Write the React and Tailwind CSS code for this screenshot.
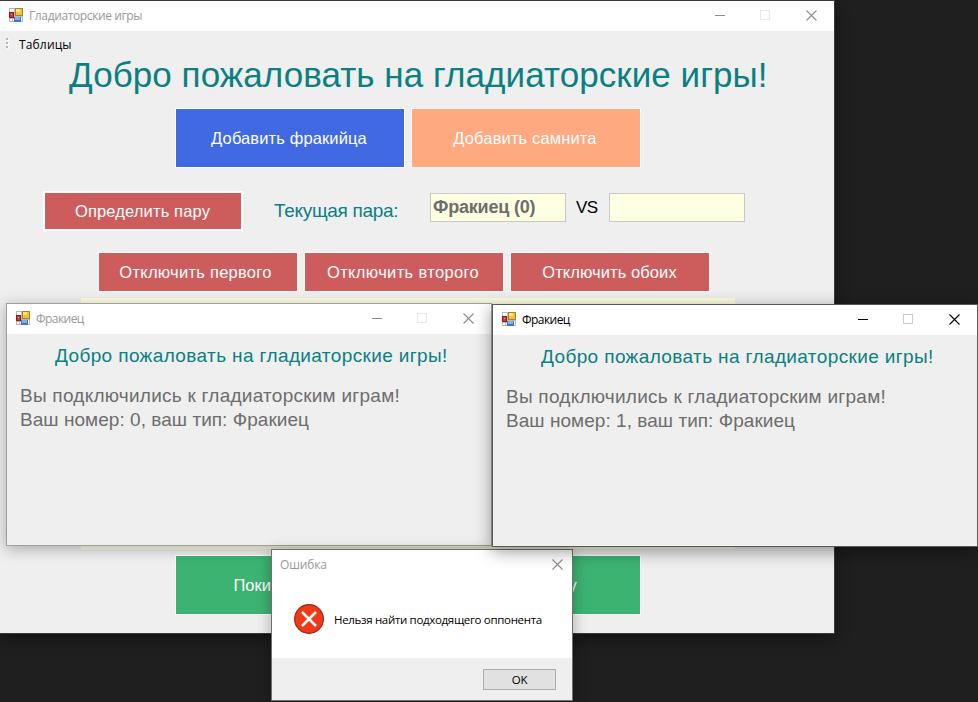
import React from "react";

const UI = "font-['Open_Sans','Noto_Sans',sans-serif]";

function FormIcon() {
  return (
    <svg width="14" height="14" viewBox="0 0 14 14" className="mb-[2px] shrink-0" shapeRendering="crispEdges">
      <rect width="14" height="14" fill="#b9b9b9" />
      <rect x="1" y="1" width="4" height="3" fill="#fff" />
      <rect x="1" y="11" width="2" height="2" fill="#fff" />
      <rect x="4" y="11" width="1" height="2" fill="#fff" />
      <rect x="12" y="9" width="1" height="4" fill="#fff" />
      <rect x="0" y="4" width="5" height="6" fill="#8e1c1c" />
      <rect x="1" y="5" width="3" height="4" fill="#c93a32" />
      <rect x="2" y="6" width="1" height="1" fill="#f0a09a" />
      <rect x="6" y="0" width="8" height="8" fill="#a8832a" />
      <rect x="7" y="1" width="6" height="6" fill="#f2c230" />
      <rect x="7" y="1" width="4" height="3" fill="#fbe48a" />
      <rect x="5" y="9" width="7" height="5" fill="#3f72c4" />
      <rect x="6" y="9" width="5" height="3" fill="#80b0ee" />
    </svg>
  );
}

function Cross({ color }) {
  return (
    <svg width="11" height="11" viewBox="0 0 11 11" className="shrink-0">
      <path d="M0.5 0.5L10.5 10.5M10.5 0.5L0.5 10.5" stroke={color} strokeWidth="1.1" fill="none" />
    </svg>
  );
}

function WindowButtons({ active }) {
  const color = active ? "#000" : "#8c8c8c";
  const muted = active ? "#cccccc" : "#e9e9e9";
  return (
    <div className="mb-px ml-auto flex items-start">
      <svg width="10" height="10" viewBox="0 0 10 10" className="mr-[35px]" shapeRendering="crispEdges">
        <rect y="5" width="10" height="1" fill={color} />
      </svg>
      <svg width="10" height="10" viewBox="0 0 10 10" className="mr-[36px]" shapeRendering="crispEdges">
        <rect x="0.5" y="0.5" width="9" height="9" fill="none" stroke={muted} />
      </svg>
      <Cross color={color} />
    </div>
  );
}

function TitleBar({ title, active, className }) {
  return (
    <div className={`flex h-[30px] shrink-0 items-center bg-white pl-[9px] pr-[17px] ${className}`}>
      <FormIcon />
      <span className={`ml-[6px] whitespace-nowrap text-[12px] leading-4 ${UI} ${active ? "text-black" : "text-[#999999]"}`}>
        {title}
      </span>
      <WindowButtons active={active} />
    </div>
  );
}

function ActionButton({ className, children }) {
  return (
    <button className={`flex shrink-0 items-center justify-center whitespace-nowrap border-white text-[16.5px] text-white ${className}`}>
      {children}
    </button>
  );
}

function FighterWindow({ number, active, className }) {
  return (
    <section className={`absolute h-[243px] w-[486px] border bg-[#efefef] ${className}`}>
      <TitleBar title="Фракиец" active={active} className="tracking-[-0.55px]" />
      <h2 className="ml-[48px] mt-[10px] whitespace-nowrap text-[19px] leading-6 tracking-[0.38px] text-[#0b8080]">
        Добро пожаловать на гладиаторские игры!
      </h2>
      <p className="ml-[13px] mt-[16px] whitespace-nowrap text-[19px] leading-6 text-[#6d6d6d]">
        <span className="tracking-[0.25px]">Вы подключились к гладиаторским играм!</span>
        <br />
        <span className="tracking-[0.04px]">Ваш номер: {number}, ваш тип: Фракиец</span>
      </p>
    </section>
  );
}

export default function App() {
  return (
    <main className="relative h-[702px] w-[978px] overflow-hidden bg-[#1f1f1f] font-['Liberation_Sans',Arial,sans-serif]">
      <section className="absolute left-0 top-0 flex h-[634px] w-[835px] flex-col border-b border-r border-t border-[#3a3a3a] bg-[#efefef] shadow-[0_5px_14px_rgba(0,0,0,0.4)]">
        <TitleBar title="Гладиаторские игры" className="tracking-[-0.38px]" />
        <nav className="flex h-6 shrink-0 items-center pl-[6px]">
          <div className="mb-px flex w-[13px] flex-col gap-[2px]">
            <i className="size-[2px] bg-[#b4b4b4] shadow-[1px_1px_0_#fff]" />
            <i className="size-[2px] bg-[#b4b4b4] shadow-[1px_1px_0_#fff]" />
            <i className="size-[2px] bg-[#b4b4b4] shadow-[1px_1px_0_#fff]" />
          </div>
          <span className={`mt-[3px] text-[12px] leading-4 tracking-[0.15px] text-black ${UI}`}>Таблицы</span>
        </nav>
        <h1 className="ml-[69px] h-[53px] shrink-0 whitespace-nowrap text-[35px] leading-10 tracking-[0.06px] text-[#0b8080]">
          Добро пожаловать на гладиаторские игры!
        </h1>
        <div className="flex gap-[6px] pl-[175px]">
          <ActionButton className="h-[60px] w-[230px] border bg-[#4169e1] pr-[2px] tracking-[0.12px]">Добавить фракийца</ActionButton>
          <ActionButton className="h-[60px] w-[230px] border bg-[#ffa980] pr-[2px] tracking-[0.14px]">Добавить самнита</ActionButton>
        </div>
        <div className="mt-[23px] flex h-[40px] shrink-0 items-center pl-[43px]">
          <ActionButton className="h-[40px] w-[200px] border-2 bg-[#cd5c5c] pr-px tracking-[0.14px]">Определить пару</ActionButton>
          <span className="ml-[31px] w-[156px] whitespace-nowrap text-[19px] leading-6 tracking-[-0.3px] text-[#0b8080]">Текущая пара:</span>
          <div className="mb-[7px] flex h-[29px] w-[136px] shrink-0 items-center whitespace-nowrap border border-[#c8c8c8] bg-[#ffffe1] pl-[2px] text-[18px] font-bold tracking-[-0.2px] text-[#6d6d6d]">
            Фракиец (0)
          </div>
          <span className="mb-[7px] w-[43px] pl-[10px] text-[17px] tracking-[-0.5px] text-black">VS</span>
          <div className="mb-[7px] h-[29px] w-[136px] shrink-0 border border-[#c8c8c8] bg-[#ffffe1]" />
        </div>
        <div className="mt-[21px] flex gap-[6px] pl-[98px]">
          <ActionButton className="h-[40px] w-[200px] border border-[#f7f7f7] bg-[#cd5c5c] pr-[5px] tracking-[0.26px]">Отключить первого</ActionButton>
          <ActionButton className="h-[40px] w-[200px] border border-[#f7f7f7] bg-[#cd5c5c] pr-[2px] tracking-[0.34px]">Отключить второго</ActionButton>
          <ActionButton className="h-[40px] w-[200px] border border-[#f7f7f7] bg-[#cd5c5c] pr-px tracking-[0.08px]">Отключить обоих</ActionButton>
        </div>
        <div className="ml-[81px] mt-[6px] h-[251px] w-[654px] shrink-0 bg-[#ffffe1]" />
        <div className="mt-[6px] flex gap-[6px] pl-[175px]">
          <ActionButton className="h-[60px] w-[230px] border bg-[#3cb371] pr-[5px]">Покинуть игру</ActionButton>
          <ActionButton className="h-[60px] w-[230px] border bg-[#3cb371]">Начать битву</ActionButton>
        </div>
      </section>

      <FighterWindow
        number={0}
        className="left-[6px] top-[303px] border-[#a0a0a0] shadow-[0_3px_14px_rgba(0,0,0,0.3)]"
      />

      <section className="absolute left-[271px] top-[549px] flex h-[152px] w-[302px] flex-col border border-[#707070] bg-white shadow-[0_3px_14px_rgba(0,0,0,0.3)]">
        <div className="flex h-[30px] items-center pl-[8px] pr-[9px]">
          <span className={`text-[12px] leading-4 tracking-[-0.15px] text-[#999999] ${UI}`}>Ошибка</span>
          <span className="mb-px ml-auto flex">
            <Cross color="#8c8c8c" />
          </span>
        </div>
        <div className="flex h-[78px] items-center pl-[22px]">
          <svg width="30" height="30" viewBox="0 0 30 30" className="shrink-0">
            <circle cx="15" cy="15" r="14.4" fill="#f03a17" stroke="#9c2b1b" strokeWidth="1.2" />
            <path d="M8 8L22 22M22 8L8 22" stroke="#fff" strokeWidth="2.5" fill="none" />
          </svg>
          <span className={`ml-[10px] mt-[2px] whitespace-nowrap text-[11.5px] leading-4 tracking-[-0.33px] text-black ${UI}`}>
            Нельзя найти подходящего оппонента
          </span>
        </div>
        <div className="flex flex-1 items-center justify-end bg-[#efefef] pr-[16px]">
          <button className={`h-[21px] w-[73px] border border-[#adadad] bg-[#e1e1e1] pt-px text-[11.5px] leading-4 tracking-[-0.3px] text-black ${UI}`}>
            OK
          </button>
        </div>
      </section>

      <FighterWindow
        number={1}
        active
        className="left-[492px] top-[304px] border-[#5a5a5a] shadow-[0_4px_16px_rgba(0,0,0,0.42)]"
      />
    </main>
  );
}
